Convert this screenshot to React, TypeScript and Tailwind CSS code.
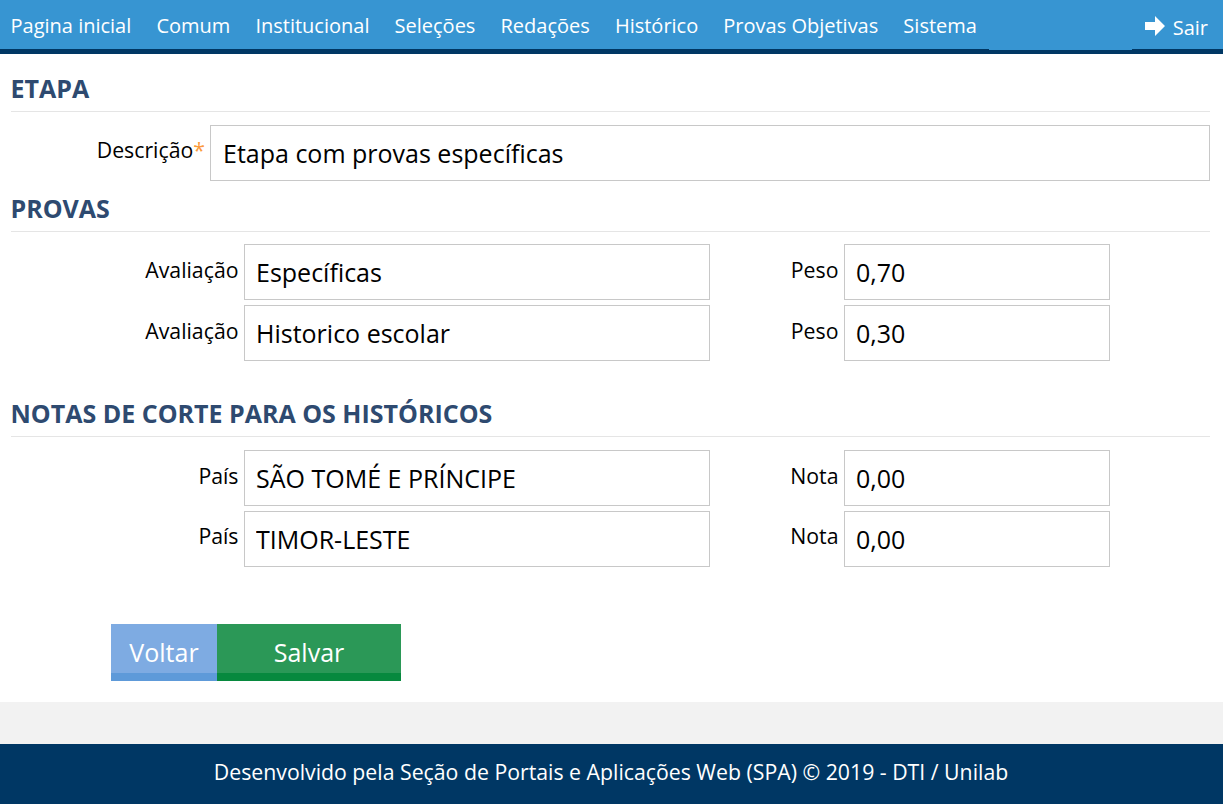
const menu = ['Pagina inicial', 'Comum', 'Institucional', 'Seleções', 'Redações', 'Histórico', 'Provas Objetivas', 'Sistema'];

function SectionTitle({ children, className }: { children: string; className: string }) {
  return (
    <h2 className={`h-[41px] border-b border-[#e5e5e5] indent-[-0.5px] text-[25px] leading-[34px] font-bold text-[#2e4a70] ${className}`}>
      {children}
    </h2>
  );
}

function Field({ value, className }: { value: string; className: string }) {
  return (
    <input
      readOnly
      value={value}
      className={`h-14 border border-[#c8c8c8] bg-white text-[25px] text-black outline-none ${className}`}
    />
  );
}

function PairRow({ label, value, label2, value2, className, labelTop = 'pt-[11px]' }: { label: string; value: string; label2: string; value2: string; className: string; labelTop?: string }) {
  return (
    <div className={`flex items-start ${className}`}>
      <label className={`w-[233px] pr-[5.5px] text-right text-[21.28px] leading-[30px] text-black ${labelTop}`}>{label}</label>
      <Field value={value} className="w-[466px] px-[11px]" />
      <label className={`w-[134px] pr-[5.5px] text-right text-[21.28px] leading-[30px] text-black ${labelTop}`}>{label2}</label>
      <Field value={value2} className="w-[266px] px-[11px]" />
    </div>
  );
}

export default function App() {
  return (
    <div className="flex min-h-[804px] flex-col bg-white font-['Open_Sans','Noto_Sans',sans-serif]">
      <nav className="relative flex h-[54px] items-start justify-between border-b-[5px] border-[#003764] bg-[#3795d2] text-white">
        <ul className="flex gap-[25.1px] pt-[11px] pl-[10.5px] text-[20px] leading-[30px]">
          {menu.map((item) => (
            <li key={item}>{item}</li>
          ))}
        </ul>
        <a className="flex items-center gap-2 pt-[13px] pr-[15px] text-[20px] leading-[30px]">
          <svg width="20" height="20" viewBox="0 0 20 20" fill="currentColor" className="-mt-1">
            <path d="M0 6h10V0l10 10-10 10v-6H0z" />
          </svg>
          Sair
        </a>
        <span className="absolute -bottom-px left-[989px] h-px w-[143px] bg-[#3795d2]" />
      </nav>

      <main className="flex-1 pr-[13px] pl-[11px]">
        <SectionTitle className="mt-[17px]">ETAPA</SectionTitle>
        <div className="mt-[13px] flex items-start">
          <label className="w-[199px] pt-[10px] pr-[5px] text-right text-[21.28px] leading-[30px] text-black">
            Descrição<span className="text-[#fb9a3c]">*</span>
          </label>
          <Field value="Etapa com provas específicas" className="w-[1000px] px-3" />
        </div>

        <SectionTitle className="mt-[10px]">PROVAS</SectionTitle>
        <PairRow className="mt-[12px]" label="Avaliação" value="Específicas" label2="Peso" value2="0,70" />
        <PairRow className="mt-[5px]" label="Avaliação" value="Historico escolar" label2="Peso" value2="0,30" />

        <SectionTitle className="mt-[35px]">NOTAS DE CORTE PARA OS HISTÓRICOS</SectionTitle>
        <PairRow className="mt-[13px]" label="País" value="SÃO TOMÉ E PRÍNCIPE" label2="Nota" value2="0,00" />
        <PairRow className="mt-[5px]" labelTop="pt-[10px]" label="País" value="TIMOR-LESTE" label2="Nota" value2="0,00" />

        <div className="mt-[57px] ml-[100px] flex text-[25px] text-white">
          <button className="h-[57px] w-[106px] border-b-[8px] border-[#5e9ad9] bg-[#7eabe2] pt-[8px]">Voltar</button>
          <button className="h-[57px] w-[184px] border-b-[8px] border-[#07893e] bg-[#2b9857] pt-[8px]">Salvar</button>
        </div>
      </main>

      <div className="mt-[21px] h-[42px] bg-[#f2f2f2]" />
      <footer className="flex h-[60px] items-center justify-center bg-[#003764] pr-[1px] pb-[4px] text-[21.28px] text-white">
        Desenvolvido pela Seção de Portais e Aplicações Web (SPA) © 2019 - DTI / Unilab
      </footer>
    </div>
  );
}
